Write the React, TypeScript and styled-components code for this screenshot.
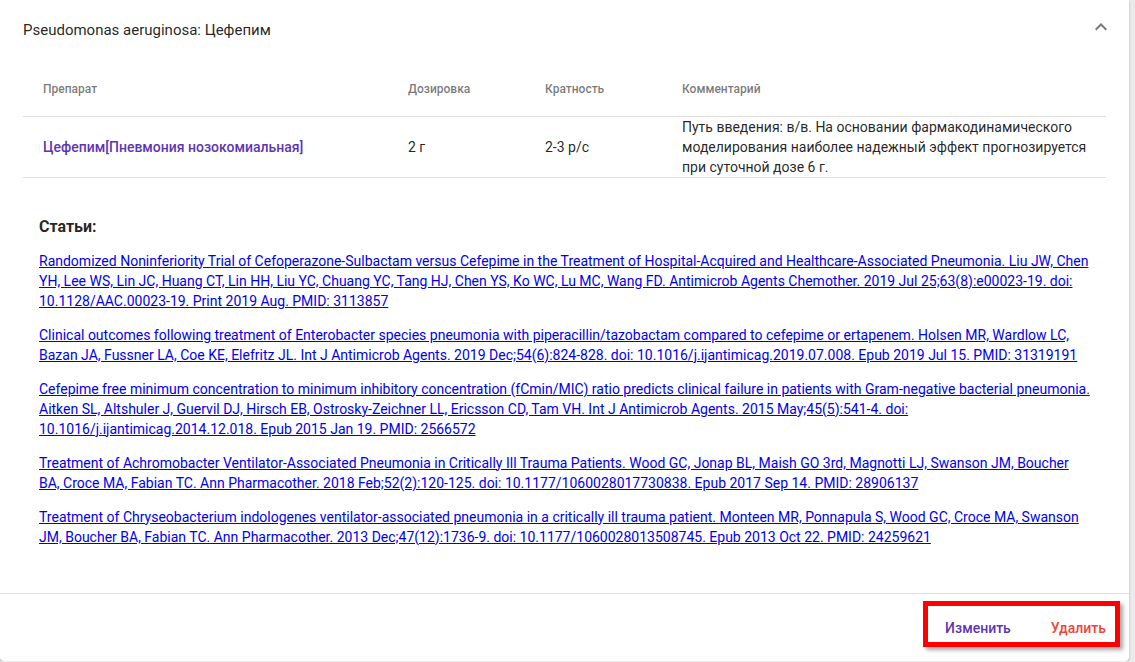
import React from "react";
import styled, { createGlobalStyle } from "styled-components";

const Global = createGlobalStyle`
  html, body { margin: 0; padding: 0; }
  body {
    background: #ebebeb;
    font-family: Roboto, "Noto Sans", "Liberation Sans", sans-serif;
    color: rgba(0,0,0,0.87);
  }
`;

const Card = styled.div`
  width: 1129px;
  min-height: 661px;
  background: #fff;
  box-shadow: 0 1px 3px rgba(0,0,0,0.2), 0 1px 1px rgba(0,0,0,0.14);
  border-radius: 0 0 4px 4px;
  box-sizing: border-box;
  display: flex;
  flex-direction: column;
`;

const Summary = styled.div`
  height: 59px;
  display: flex;
  align-items: center;
  justify-content: space-between;
  padding: 0 16px 0 23px;
`;

const Title = styled.div`
  font-size: 15px;
  line-height: 20px;
`;

const Chevron = styled.svg`
  width: 24px;
  height: 24px;
  fill: rgba(0,0,0,0.54);
  margin-top: -6px;
`;

const Details = styled.div`
  padding: 0 23px;
`;

const Table = styled.table`
  width: 100%;
  border-collapse: collapse;
  table-layout: fixed;
`;

const HeadCell = styled.th<{ $w?: number }>`
  width: ${(p) => (p.$w ? `${p.$w}px` : "auto")};
  height: 57px;
  text-align: left;
  padding: 3px 16px 0 20px;
  font-size: 12px;
  font-weight: 500;
  color: rgba(0,0,0,0.54);
  border-bottom: 1px solid #e0e0e0;
  vertical-align: middle;
  box-sizing: border-box;
`;

const Cell = styled.td<{ $accent?: boolean }>`
  height: 60px;
  padding: 0 16px 0 20px;
  font-size: 14px;
  line-height: 20px;
  font-weight: ${(p) => (p.$accent ? 500 : 400)};
  color: ${(p) => (p.$accent ? "#5e35b1" : "rgba(0,0,0,0.87)")};
  border-bottom: 1px solid #e0e0e0;
  vertical-align: middle;
`;

const Articles = styled.div`
  padding: 39px 37px 0 39px;
`;

const ArticlesTitle = styled.div`
  font-size: 16px;
  font-weight: 700;
  line-height: 20px;
  margin-bottom: 14px;
`;

const ArticleLink = styled.a`
  display: block;
  font-size: 14px;
  line-height: 20px;
  color: #0000ee;
  text-decoration: underline;
  margin-bottom: 14px;
`;

const Divider = styled.div`
  margin-top: auto;
  height: 1px;
  background: #e0e0e0;
`;

const Footer = styled.div`
  display: flex;
  justify-content: flex-end;
  padding: 7px 9px 14px 0;
`;

const Highlight = styled.div`
  border: 5px solid #ff0000;
  height: 36px;
  display: flex;
  align-items: flex-start;
  gap: 24px;
  padding: 0 1px 0 9px;
  box-shadow: 3px 3px 4px rgba(0,0,0,0.35);
`;

const ActionButton = styled.button<{ $danger?: boolean }>`
  background: none;
  border: none;
  font-family: Roboto, "Noto Sans", "Liberation Sans", sans-serif;
  font-size: 14px;
  font-weight: 500;
  line-height: 24px;
  padding: 10px 8px 2px;
  color: ${(p) => (p.$danger ? "#f44336" : "#5e35b1")};
  cursor: pointer;
`;

const articles = [
  "Randomized Noninferiority Trial of Cefoperazone-Sulbactam versus Cefepime in the Treatment of Hospital-Acquired and Healthcare-Associated Pneumonia. Liu JW, Chen YH, Lee WS, Lin JC, Huang CT, Lin HH, Liu YC, Chuang YC, Tang HJ, Chen YS, Ko WC, Lu MC, Wang FD. Antimicrob Agents Chemother. 2019 Jul 25;63(8):e00023-19. doi: 10.1128/AAC.00023-19. Print 2019 Aug. PMID: 3113857",
  "Clinical outcomes following treatment of Enterobacter species pneumonia with piperacillin/tazobactam compared to cefepime or ertapenem. Holsen MR, Wardlow LC, Bazan JA, Fussner LA, Coe KE, Elefritz JL. Int J Antimicrob Agents. 2019 Dec;54(6):824-828. doi: 10.1016/j.ijantimicag.2019.07.008. Epub 2019 Jul 15. PMID: 31319191",
  "Cefepime free minimum concentration to minimum inhibitory concentration (fCmin/MIC) ratio predicts clinical failure in patients with Gram-negative bacterial pneumonia. Aitken SL, Altshuler J, Guervil DJ, Hirsch EB, Ostrosky-Zeichner LL, Ericsson CD, Tam VH. Int J Antimicrob Agents. 2015 May;45(5):541-4. doi: 10.1016/j.ijantimicag.2014.12.018. Epub 2015 Jan 19. PMID: 2566572",
  "Treatment of Achromobacter Ventilator-Associated Pneumonia in Critically Ill Trauma Patients. Wood GC, Jonap BL, Maish GO 3rd, Magnotti LJ, Swanson JM, Boucher BA, Croce MA, Fabian TC. Ann Pharmacother. 2018 Feb;52(2):120-125. doi: 10.1177/1060028017730838. Epub 2017 Sep 14. PMID: 28906137",
  "Treatment of Chryseobacterium indologenes ventilator-associated pneumonia in a critically ill trauma patient. Monteen MR, Ponnapula S, Wood GC, Croce MA, Swanson JM, Boucher BA, Fabian TC. Ann Pharmacother. 2013 Dec;47(12):1736-9. doi: 10.1177/1060028013508745. Epub 2013 Oct 22. PMID: 24259621",
];

export default function App() {
  return (
    <>
      <Global />
      <Card>
        <Summary>
          <Title>Pseudomonas aeruginosa: Цефепим</Title>
          <Chevron viewBox="0 0 24 24">
            <path d="M12 8l-6 6 1.41 1.41L12 10.83l4.59 4.58L18 14z" />
          </Chevron>
        </Summary>
        <Details>
          <Table>
            <thead>
              <tr>
                <HeadCell $w={365}>Препарат</HeadCell>
                <HeadCell $w={137}>Дозировка</HeadCell>
                <HeadCell $w={137}>Кратность</HeadCell>
                <HeadCell>Комментарий</HeadCell>
              </tr>
            </thead>
            <tbody>
              <tr>
                <Cell $accent>Цефепим[Пневмония нозокомиальная]</Cell>
                <Cell>2 г</Cell>
                <Cell>2-3 р/с</Cell>
                <Cell>
                  Путь введения: в/в. На основании фармакодинамического моделирования наиболее надежный эффект прогнозируется при суточной дозе 6 г.
                </Cell>
              </tr>
            </tbody>
          </Table>
        </Details>
        <Articles>
          <ArticlesTitle>Статьи:</ArticlesTitle>
          {articles.map((a, i) => (
            <ArticleLink key={i} href="#">
              {a}
            </ArticleLink>
          ))}
        </Articles>
        <Divider />
        <Footer>
          <Highlight>
            <ActionButton>Изменить</ActionButton>
            <ActionButton $danger>Удалить</ActionButton>
          </Highlight>
        </Footer>
      </Card>
    </>
  );
}
